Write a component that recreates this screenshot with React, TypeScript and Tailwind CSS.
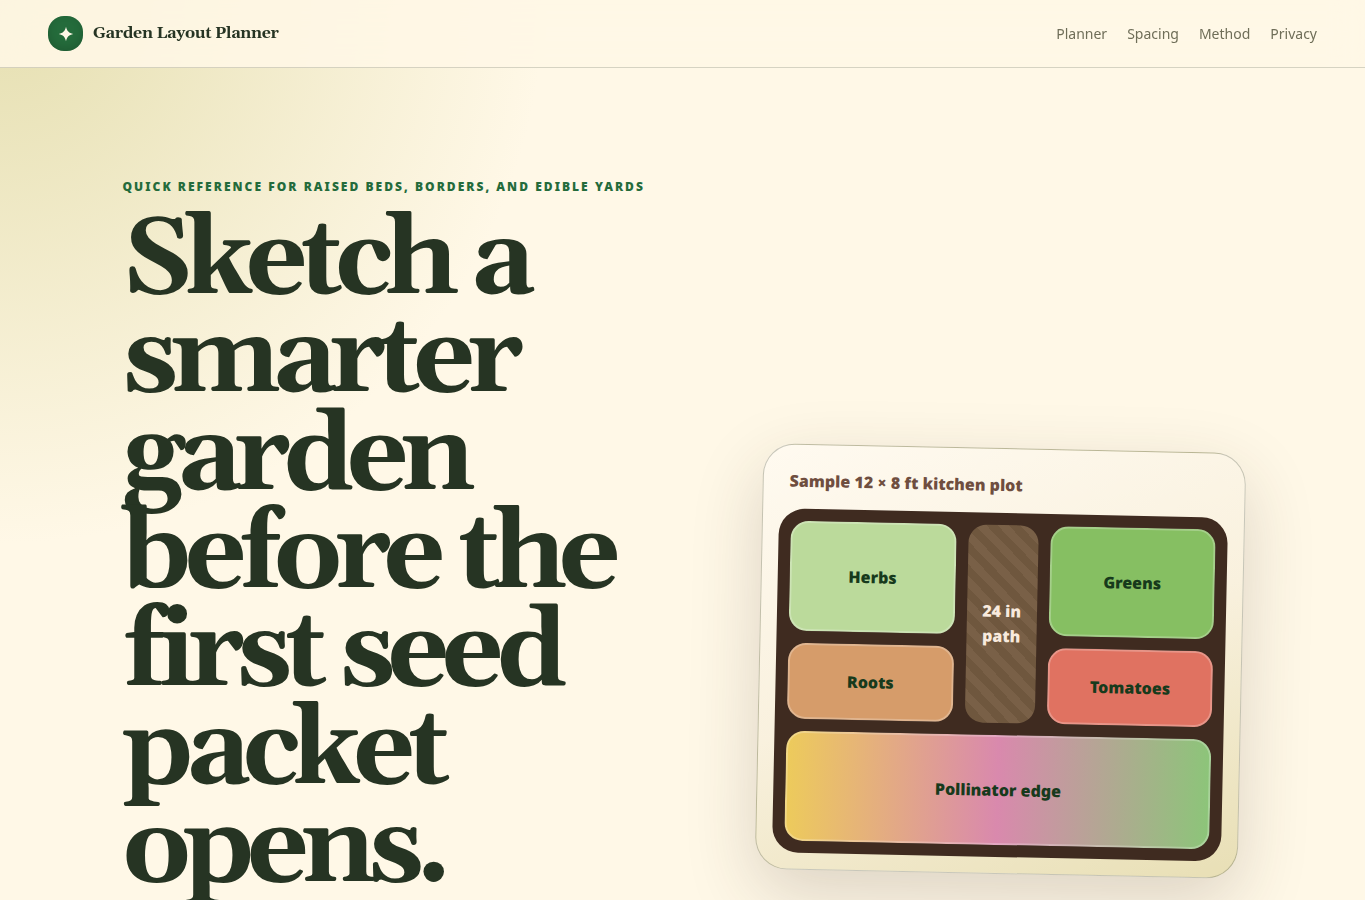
const navLinks = [
  { label: "Planner", href: "#planner" },
  { label: "Spacing", href: "#spacing" },
  { label: "Method", href: "#method" },
  { label: "Privacy", href: "#privacy" },
];

const Header = () => {
  return (
    <header className="sticky top-0 z-10 flex items-center justify-between border-b border-[#26342330] bg-[#fff7e6e0] px-12 py-4 backdrop-blur-lg">
      <a href="#" className="flex items-center gap-2.5">
        <span className="grid size-[35px] place-items-center rounded-[16px] bg-[#246b3b] shadow-[inset_0_-3px_8px_rgba(0,0,0,0.15)]">
          <svg viewBox="0 0 16 16" className="size-4" aria-hidden="true">
            <path
              d="M8 .8C8.9 5 11 7.1 15.2 8C11 8.9 8.9 11 8 15.2C7.1 11 5 8.9.8 8C5 7.1 7.1 5 8 .8Z"
              fill="#fff8e7"
            />
          </svg>
        </span>
        <span className="pb-0.5 font-[Georgia,Gelasio,'Liberation_Serif',serif] text-base leading-6 font-bold tracking-[-0.02em]">
          Garden Layout Planner
        </span>
      </a>
      <nav className="flex gap-5 text-sm text-[#6f6e58]">
        {navLinks.map((link) => (
          <a key={link.label} href={link.href}>
            {link.label}
          </a>
        ))}
      </nav>
    </header>
  );
};

const bedClass =
  "grid place-items-center rounded-[18px] border-2 border-white/25 text-center";

const GardenPlot = () => {
  return (
    <div className="rotate-[1.2deg] rounded-[32px] border border-[#26342340] bg-linear-[160deg,#fffaf0,#f9f1de_50%,#e8dfb5] p-4 font-black shadow-[0_24px_70px_rgba(61,43,31,0.18)]">
      <p className="px-2.5 pt-2 pb-[15px] text-[#6f4e3f]">
        Sample 12 × 8 ft kitchen plot
      </p>
      <div className="grid grid-cols-[1fr_70px_1fr] grid-rows-[110px_76px_110px] gap-3 rounded-[26px] bg-[#3f2b20] p-3 text-[#173a1c]">
        <div className={`${bedClass} bg-[#bbda9b]`}>Herbs</div>
        <div className="row-span-2 grid place-items-center rounded-[18px] bg-[repeating-linear-gradient(45deg,#796047_0_8px,#6f573e_8px_16px)] text-center text-[#f8eadd]">
          24 in path
        </div>
        <div className={`${bedClass} bg-[#86bf62]`}>Greens</div>
        <div className={`${bedClass} bg-[#d69c6a]`}>Roots</div>
        <div className={`${bedClass} bg-[#e07261]`}>Tomatoes</div>
        <div
          className={`${bedClass} col-span-3 bg-linear-[90deg,#edcb5b,#d989ad_50%,#8cc579] bg-origin-border`}
        >
          Pollinator edge
        </div>
      </div>
    </div>
  );
};

const App = () => {
  return (
    <div className="min-h-screen overflow-x-clip bg-[#fff8e7] bg-[radial-gradient(circle_at_top_left,#e5dfb0,transparent_544px)] bg-no-repeat font-['Segoe_UI','Noto_Sans',sans-serif] text-base leading-[25px] text-[#263423]">
      <Header />
      <main className="mx-auto grid max-w-[1120px] grid-cols-[1.1fr_0.9fr] items-center gap-[46px] pt-[106px]">
        <section className="pb-[248px]">
          <p className="text-xs leading-[25px] font-black tracking-[0.17em] text-[#246b3b] uppercase">
            Quick reference for raised beds, borders, and edible yards
          </p>
          <h1 className="mt-[14px] font-[Georgia,Gelasio,'Liberation_Serif',serif] text-[108px] leading-[98px] font-bold tracking-[-0.07em]">
            Sketch a smarter garden before the first seed packet opens.
          </h1>
        </section>
        <GardenPlot />
      </main>
    </div>
  );
};

export default App;
